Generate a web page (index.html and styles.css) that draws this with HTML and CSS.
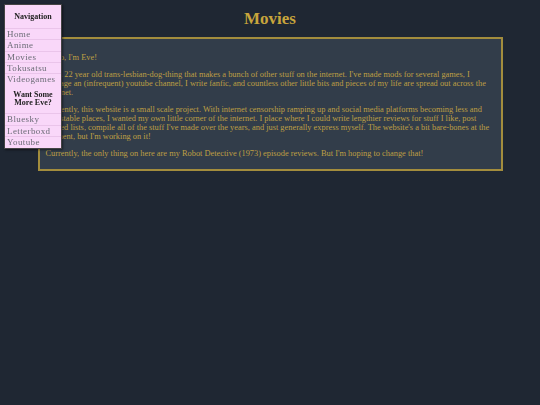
FILE: index.html
```html
<!DOCTYPE html>
<html>
<head>
<meta charset="utf-8">
<title>Movies</title>
<link rel="stylesheet" href="styles.css">
</head>
<body>
<nav class="sidebar">
  <h3 class="side-title">Navigation</h3>
  <ul class="side-list">
    <li><a href="#">Home</a></li>
    <li><a href="#">Anime</a></li>
    <li><a href="#">Movies</a></li>
    <li><a href="#">Tokusatsu</a></li>
    <li><a href="#">Videogames</a></li>
  </ul>
  <h3 class="side-title side-title-2">Want Some More Eve?</h3>
  <ul class="side-list">
    <li><a href="#">Bluesky</a></li>
    <li><a href="#">Letterboxd</a></li>
    <li><a href="#">Youtube</a></li>
  </ul>
</nav>
<h1 class="page-title">Movies</h1>
<main class="content">
  <p>Hello, I'm Eve!</p>
  <p>I'm a 22 year old trans-lesbian-dog-thing that makes a bunch of other stuff on the internet. I've made mods for several games, I manage an (infrequent) youtube channel, I write fanfic, and countless other little bits and pieces of my life are spread out across the internet.</p>
  <p>Currently, this website is a small scale project. With internet censorship ramping up and social media platforms becoming less and less stable places, I wanted my own little corner of the internet. I place where I could write lengthier reviews for stuff I like, post ranked lists, compile all of the stuff I've made over the years, and just generally express myself. The website's a bit bare-bones at the moment, but I'm working on it!</p>
  <p>Currently, the only thing on here are my Robot Detective (1973) episode reviews. But I'm hoping to change that!</p>
</main>
</body>
</html>
```
FILE: styles.css
```css
html, body {
  margin: 0;
  padding: 0;
}
body {
  background: #1f2733;
  font-family: "Liberation Serif", "DejaVu Serif", serif;
  color: #bf9f44;
  min-height: 405px;
}
.page-title {
  margin: 0;
  padding: 9px 0 0;
  height: 28px;
  text-align: center;
  font-size: 17px;
  font-weight: bold;
  color: #c8a53c;
  line-height: 20px;
}
.content {
  width: 449px;
  margin: 0 auto;
  padding: 6px 6px 3px;
  background: #323d4a;
  border: 2px solid #a38d3d;
  font-size: 8.4px;
  line-height: 9px;
}
.content p {
  margin: 8px 0;
}
.sidebar {
  position: fixed;
  left: 4px;
  top: 4px;
  width: 56px;
  padding-bottom: 1px;
  background: #f9d7f9;
  border: 1px solid #444;
  box-shadow: 1px 1px 2px rgba(0,0,0,0.5);
  font-family: "Liberation Serif", "DejaVu Serif", serif;
}
.side-title {
  margin: 0;
  padding: 8px 2px 7px;
  text-align: center;
  font-size: 8px;
  line-height: 8px;
  font-weight: bold;
  color: #222;
  border-bottom: 1px solid #eac4ea;
}
.side-title-2 {
  padding: 6.5px 2px 6.5px;
}
.side-list {
  list-style: none;
  margin: 0;
  padding: 0;
}
.side-list li {
  border-bottom: 1px solid #eac4ea;
  height: 10.3px;
}
.side-list li:last-child {
  border-bottom: none;
}
.side-list a {
  display: block;
  padding: 0 2px;
  font-size: 9px;
  letter-spacing: 0.4px;
  line-height: 10.3px;
  color: #6b6c76;
  text-decoration: none;
}
```
